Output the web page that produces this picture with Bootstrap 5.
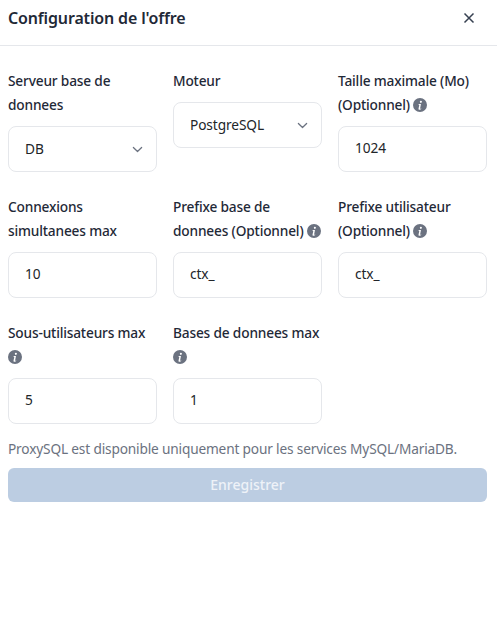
<!DOCTYPE html>
<html lang="fr">
<head>
<meta charset="utf-8">
<title>Configuration de l'offre</title>
<link rel="stylesheet" href="https://cdn.jsdelivr.net/npm/bootstrap@5.3.0/dist/css/bootstrap.min.css">
<style>
body { font-family: "Noto Sans", "Open Sans", sans-serif; font-size: 14px; color: #212529; background: #fff; }
.head-bar { height: 46px; padding: 0 22px 9px 8px; border-bottom: 1px solid #e5e7eb; }
.head-title { font-size: 16px; font-weight: 600; color: #1f2937; line-height: 24px; letter-spacing: -0.15px; }
.close-btn { background: none; border: 0; padding: 0; width: 12px; height: 12px; line-height: 0; color: #374151; }
.form-area { padding: 23px 10px 0 8px; }
.fld { margin-bottom: 23px; }
.fld-label { display: block; line-height: 24px; margin-bottom: 9px; font-size: 13.7px; letter-spacing: -0.17px; font-weight: 500; color: #1f2937; }
.fld-input { height: 46px; border: 1px solid #e5e7eb; border-radius: 8px; padding: 0 16px 3px; font-size: 13.7px; letter-spacing: -0.1px; color: #212529; box-shadow: none; }
.form-select.fld-input { padding: 0 30px 0 16px; background-position: right 13px center; background-size: 11px 11px; background-image: url("data:image/svg+xml,%3csvg xmlns='http://www.w3.org/2000/svg' viewBox='0 0 16 16'%3e%3cpath fill='none' stroke='%236b7280' stroke-linecap='round' stroke-linejoin='round' stroke-width='1.8' d='m2 5 6 6 6-6'/%3e%3c/svg%3e"); }
.info-ico { display: inline-block; width: 14px; height: 14px; vertical-align: -2px; margin-left: 1px; }
.fld-label > .info-ico:first-child { margin-left: 0; }
.hint-text { font-size: 13.7px; letter-spacing: -0.17px; line-height: 20px; color: #6b7280; margin: -8px 0 9px; }
.save-btn { height: 34px; width: 100%; background: #bccde2; border: 0; border-radius: 6px; color: #fff; font-size: 14px; font-weight: 500; padding: 0 0 2px; opacity: 1; }
.save-btn:disabled { background: #bccde2; color: #eef2f8; opacity: 1; }
</style>
</head>
<body>
<svg class="d-none"><symbol id="ico-info" viewBox="0 0 16 16"><path fill="#6b7280" d="M8 0a8 8 0 1 1 0 16A8 8 0 0 1 8 0zm1 3.2a1.2 1.2 0 1 0 0 2.4 1.2 1.2 0 0 0 0-2.4zM6.4 6.9l-.1.7c.9.1 1 .3.8 1.1l-.7 3c-.3 1.2.1 1.7 1.1 1.7.8 0 1.4-.3 1.9-.9l.1-.6c-.4.3-.8.4-1 .4-.3 0-.4-.2-.3-.7l.9-4.7z"/></symbol></svg>
<header class="head-bar d-flex align-items-center justify-content-between">
  <h1 class="head-title m-0">Configuration de l'offre</h1>
  <button type="button" class="close-btn" aria-label="Fermer"><svg width="12" height="12" viewBox="0 0 12 12"><path d="M1.5 1.5l9 9M10.5 1.5l-9 9" stroke="currentColor" stroke-width="1.5" fill="none"/></svg></button>
</header>
<form class="form-area">
  <div class="row gx-3">
    <div class="col-4 fld">
      <label class="fld-label">Serveur base de donnees</label>
      <select class="form-select fld-input"><option>DB</option></select>
    </div>
    <div class="col-4 fld">
      <label class="fld-label">Moteur</label>
      <select class="form-select fld-input"><option>PostgreSQL</option></select>
    </div>
    <div class="col-4 fld">
      <label class="fld-label">Taille maximale (Mo) (Optionnel) <svg class="info-ico"><use href="#ico-info"/></svg></label>
      <input class="form-control fld-input" value="1024">
    </div>
    <div class="col-4 fld">
      <label class="fld-label">Connexions simultanees max</label>
      <input class="form-control fld-input" value="10">
    </div>
    <div class="col-4 fld">
      <label class="fld-label">Prefixe base de donnees (Optionnel) <svg class="info-ico"><use href="#ico-info"/></svg></label>
      <input class="form-control fld-input" value="ctx_">
    </div>
    <div class="col-4 fld">
      <label class="fld-label">Prefixe utilisateur (Optionnel) <svg class="info-ico"><use href="#ico-info"/></svg></label>
      <input class="form-control fld-input" value="ctx_">
    </div>
    <div class="col-4 fld">
      <label class="fld-label">Sous-utilisateurs max <svg class="info-ico"><use href="#ico-info"/></svg></label>
      <input class="form-control fld-input" value="5">
    </div>
    <div class="col-4 fld">
      <label class="fld-label">Bases de donnees max <svg class="info-ico"><use href="#ico-info"/></svg></label>
      <input class="form-control fld-input" value="1">
    </div>
  </div>
  <p class="hint-text">ProxySQL est disponible uniquement pour les services MySQL/MariaDB.</p>
  <button type="button" class="btn save-btn" disabled>Enregistrer</button>
</form>
<script src="https://cdn.jsdelivr.net/npm/bootstrap@5.3.0/dist/js/bootstrap.bundle.min.js"></script>
</body>
</html>
